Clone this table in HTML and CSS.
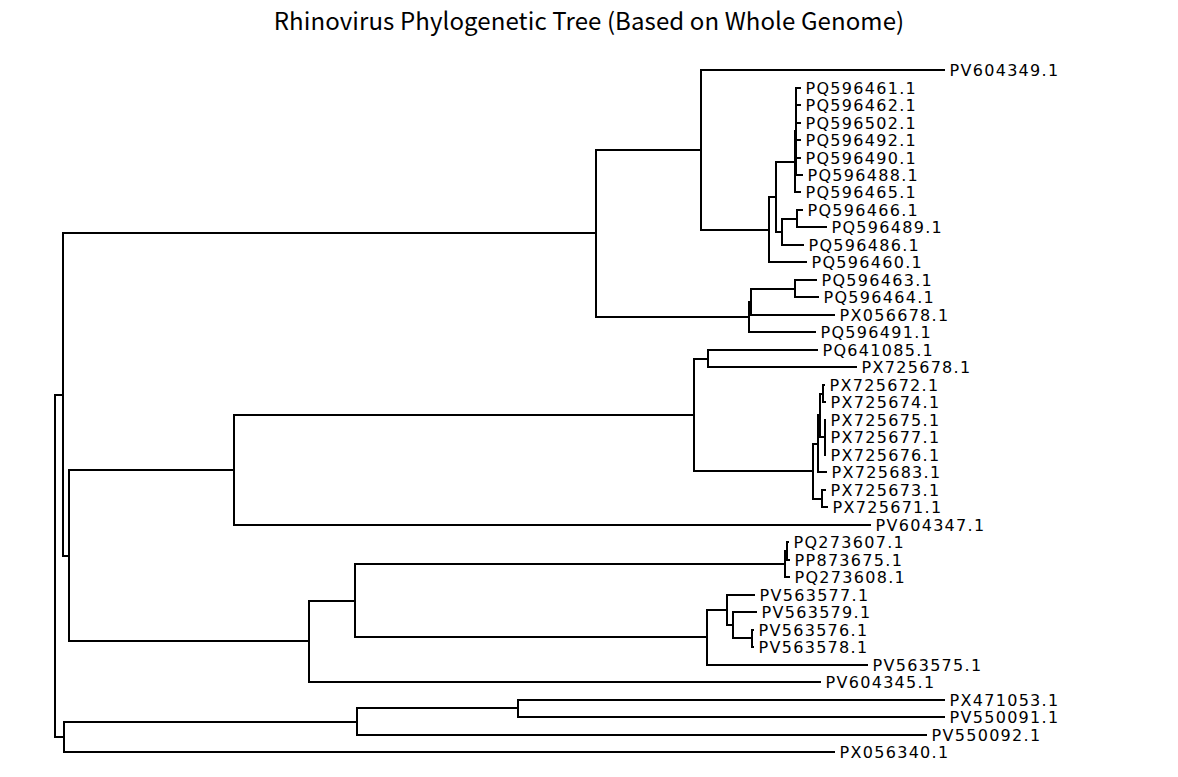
FILE: index.html
```html
<!DOCTYPE html>
<html lang="en">
<head>
<meta charset="utf-8">
<title>Rhinovirus Phylogenetic Tree</title>
<link rel="stylesheet" href="styles.css">
</head>
<body>
<div class="figure">
  <div class="title">Rhinovirus Phylogenetic Tree (Based on Whole Genome)</div>
  <svg class="tree" viewBox="0 46 1178 731" width="1178" height="731" xmlns="http://www.w3.org/2000/svg">
    <g class="branches">
      <path d="M801 87.5 H796 V174.9 H803 M796 105 H801 M796 122.5 H801 M796 140 H801 M796 157.5 H801"/>
      <path d="M796 131.2 H795 V192.4 H801"/>
      <path d="M803 209.9 H797 V227.4 H827"/>
      <path d="M797 218.65 H782 V244.9 H804"/>
      <path d="M795 161.8 H776 V231.8 H782"/>
      <path d="M776 196.8 H769 V262.4 H807"/>
      <path d="M945 70 H701 V229.6 H769"/>
      <path d="M817 279.9 H795 V297.4 H819"/>
      <path d="M795 288.65 H751 V314.9 H835"/>
      <path d="M751 301.8 H749 V332.4 H816"/>
      <path d="M701 149.8 H596 V317.1 H749"/>
      <path d="M818 349.8 H708 V367.3 H857"/>
      <path d="M825 384.8 H823 V402.3 H826"/>
      <path d="M826 419.8 H824.5 V454.8 H826 M824.5 437.3 H826"/>
      <path d="M823 393.55 H819.5 V437.3 H824.5"/>
      <path d="M819.5 415.4 H818 V472.3 H827"/>
      <path d="M826 489.8 H822 V507.3 H828"/>
      <path d="M818 443.85 H813 V498.55 H822"/>
      <path d="M708 358.55 H694 V471.2 H813"/>
      <path d="M694 414.9 H234 V524.7 H871"/>
      <path d="M789 542.2 H786.5 V559.7 H790"/>
      <path d="M786.5 550.95 H785 V577.2 H790"/>
      <path d="M754 629.7 H752 V647.2 H754"/>
      <path d="M757 612.2 H733 V638.45 H752"/>
      <path d="M755 594.7 H727 V625.3 H733"/>
      <path d="M727 610 H707 V664.7 H868"/>
      <path d="M785 564.1 H355 V637.35 H707"/>
      <path d="M355 600.7 H309 V682.2 H821"/>
      <path d="M234 469.8 H69 V641.45 H309"/>
      <path d="M596 233.45 H63 V555.6 H69"/>
      <path d="M945 699.6 H518 V717.1 H945"/>
      <path d="M518 708.35 H357 V734.6 H927"/>
      <path d="M357 721.5 H64 V752.1 H835"/>
      <path d="M63 394.5 H55 V736.8 H64"/>
    </g>
    <g class="labels">
      <text x="949.5" y="76">PV604349.1</text>
      <text x="805.5" y="93.5">PQ596461.1</text>
      <text x="805.5" y="111">PQ596462.1</text>
      <text x="805.5" y="128.5">PQ596502.1</text>
      <text x="805.5" y="146">PQ596492.1</text>
      <text x="805.5" y="163.5">PQ596490.1</text>
      <text x="807.5" y="180.9">PQ596488.1</text>
      <text x="805.5" y="198.4">PQ596465.1</text>
      <text x="807.5" y="215.9">PQ596466.1</text>
      <text x="831.5" y="233.4">PQ596489.1</text>
      <text x="808.5" y="250.9">PQ596486.1</text>
      <text x="811.5" y="268.4">PQ596460.1</text>
      <text x="821.5" y="285.9">PQ596463.1</text>
      <text x="823.5" y="303.4">PQ596464.1</text>
      <text x="839.5" y="320.9">PX056678.1</text>
      <text x="820.5" y="338.4">PQ596491.1</text>
      <text x="822.5" y="355.8">PQ641085.1</text>
      <text x="861.5" y="373.3">PX725678.1</text>
      <text x="829.5" y="390.8">PX725672.1</text>
      <text x="830.5" y="408.3">PX725674.1</text>
      <text x="830.5" y="425.8">PX725675.1</text>
      <text x="830.5" y="443.3">PX725677.1</text>
      <text x="830.5" y="460.8">PX725676.1</text>
      <text x="831.5" y="478.3">PX725683.1</text>
      <text x="830.5" y="495.8">PX725673.1</text>
      <text x="832.5" y="513.3">PX725671.1</text>
      <text x="875.5" y="530.7">PV604347.1</text>
      <text x="793.5" y="548.2">PQ273607.1</text>
      <text x="794.5" y="565.7">PP873675.1</text>
      <text x="794.5" y="583.2">PQ273608.1</text>
      <text x="759.5" y="600.7">PV563577.1</text>
      <text x="761.5" y="618.2">PV563579.1</text>
      <text x="758.5" y="635.7">PV563576.1</text>
      <text x="758.5" y="653.2">PV563578.1</text>
      <text x="872.5" y="670.7">PV563575.1</text>
      <text x="825.5" y="688.2">PV604345.1</text>
      <text x="949.5" y="705.6">PX471053.1</text>
      <text x="949.5" y="723.1">PV550091.1</text>
      <text x="931.5" y="740.6">PV550092.1</text>
      <text x="839.5" y="758.1">PX056340.1</text>
    </g>
  </svg>
</div>
</body>
</html>
```

FILE: styles.css
```css
html, body {
  margin: 0;
  padding: 0;
  background: #ffffff;
}

.figure {
  width: 1178px;
  height: 777px;
  display: flex;
  flex-direction: column;
  overflow: hidden;
}

.title {
  height: 46px;
  box-sizing: border-box;
  padding-top: 5px;
  font-family: "Noto Sans CJK KR", "Noto Sans", sans-serif;
  font-size: 24px;
  letter-spacing: 0.1px;
  line-height: 30px;
  color: #000;
  text-align: center;
  white-space: nowrap;
}

.tree {
  display: block;
  flex: none;
}

.branches path {
  fill: none;
  stroke: #000;
  stroke-width: 2;
  stroke-linejoin: miter;
  stroke-linecap: butt;
  shape-rendering: crispEdges;
}

.labels text {
  font-family: "DejaVu Sans", sans-serif;
  font-size: 16px;
  letter-spacing: 1.3px;
  fill: #000;
}
```
